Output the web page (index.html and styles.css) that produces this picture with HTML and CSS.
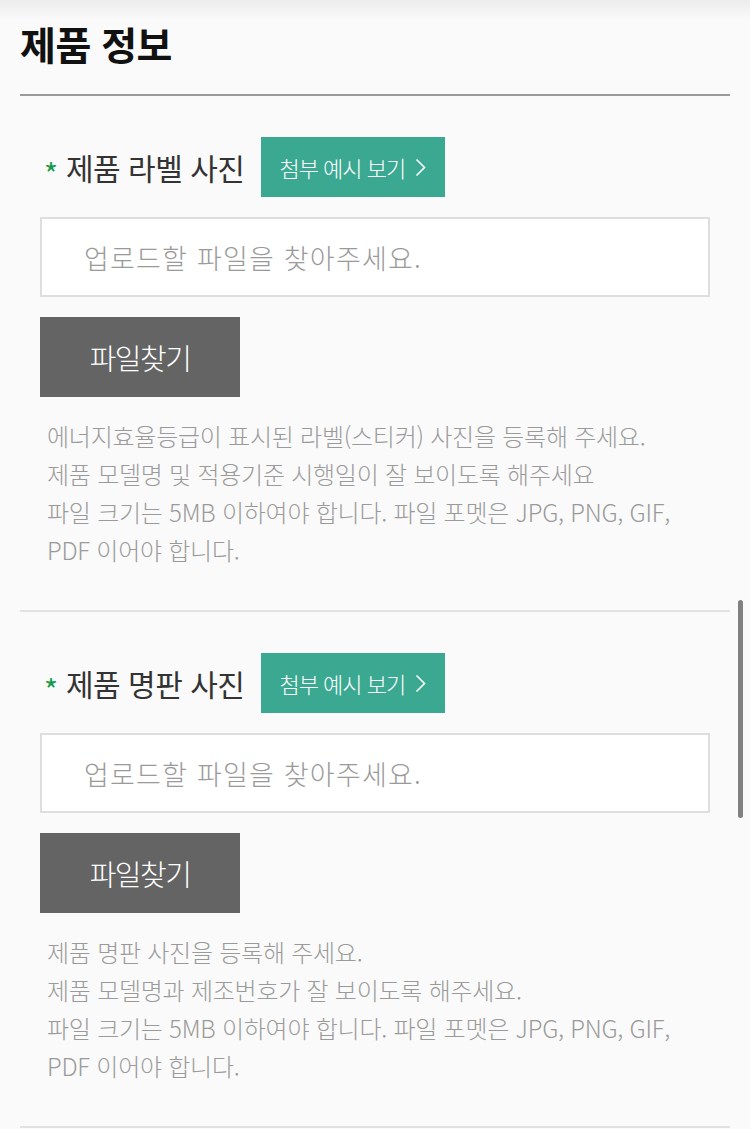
FILE: index.html
```html
<!DOCTYPE html>
<html lang="ko">
<head>
    <meta charset="UTF-8">
    <meta name="viewport" content="width=device-width, initial-scale=1">
    <title>제품 정보</title>
    <link rel="stylesheet" href="styles.css">
</head>
<body>
<div class="wrap">
    <!-- 제목 -->
    <div class="page-head">
        <h1>제품 정보</h1>
    </div>

    <!-- 제품 라벨 사진 -->
    <div class="upload-block">
        <div class="upload-label">
            <span class="req">*</span>
            <span class="label-text">제품 라벨 사진</span>
            <a href="#" class="btn-sample">첨부 예시 보기
                <svg width="11" height="19" viewBox="0 0 11 19"><path d="M1.5 1.5 L9.5 9.5 L1.5 17.5" fill="none" stroke="#fff" stroke-width="1.6"/></svg>
            </a>
        </div>
        <div class="file-input">업로드할 파일을 찾아주세요.</div>
        <button class="btn-find">파일찾기</button>
        <p class="help">
            에너지효율등급이 표시된 라벨(스티커) 사진을 등록해 주세요.<br>
            제품 모델명 및 적용기준 시행일이 잘 보이도록 해주세요<br>
            파일 크기는 5MB 이하여야 합니다. 파일 포멧은 JPG, PNG, GIF,<br>
            PDF 이어야 합니다.
        </p>
    </div>

    <!-- 제품 명판 사진 -->
    <div class="upload-block">
        <div class="upload-label">
            <span class="req">*</span>
            <span class="label-text">제품 명판 사진</span>
            <a href="#" class="btn-sample">첨부 예시 보기
                <svg width="11" height="19" viewBox="0 0 11 19"><path d="M1.5 1.5 L9.5 9.5 L1.5 17.5" fill="none" stroke="#fff" stroke-width="1.6"/></svg>
            </a>
        </div>
        <div class="file-input">업로드할 파일을 찾아주세요.</div>
        <button class="btn-find">파일찾기</button>
        <p class="help">
            제품 명판 사진을 등록해 주세요.<br>
            제품 모델명과 제조번호가 잘 보이도록 해주세요.<br>
            파일 크기는 5MB 이하여야 합니다. 파일 포멧은 JPG, PNG, GIF,<br>
            PDF 이어야 합니다.
        </p>
    </div>
</div>

<!-- 스크롤바 표시 -->
<div class="scroll-thumb"></div>
</body>
</html>
```

FILE: styles.css
```css
/* 기본 */
* { box-sizing: border-box; margin: 0; padding: 0; }
body {
    font-family: "Noto Sans CJK KR", "Noto Sans", sans-serif;
    background: #fafafa linear-gradient(#ececec, #fafafa 20px) no-repeat;
    color: #333;
}
.wrap { padding: 0 20px; }

/* 제목 */
.page-head {
    padding-top: 18px;
    padding-bottom: 26px;
    border-bottom: 2px solid #9a9a9a;
}
.page-head h1 {
    font-size: 39px;
    line-height: 50px;
    font-weight: bold;
    color: #111;
    letter-spacing: -0.5px;
}

/* 업로드 영역 */
.upload-block {
    padding: 41px 20px 41px;
    border-bottom: 2px solid #e2e2e2;
}
.upload-label {
    display: flex;
    align-items: center;
    height: 60px;
    padding-left: 4px;
}
.req {
    color: #1a9a4a;
    font-size: 30px;
    margin-right: 8px;
    position: relative;
    top: 6px;
}
.label-text {
    font-size: 30px;
    letter-spacing: -0.5px;
    color: #333;
    margin-right: 17px;
}
.btn-sample {
    display: flex;
    align-items: center;
    gap: 10px;
    height: 60px;
    width: 184px;
    padding-left: 18px;
    background: #3ba891;
    color: #fff;
    font-size: 22px;
    font-weight: 300;
    letter-spacing: -1px;
    text-decoration: none;
}
.file-input {
    margin-top: 20px;
    height: 80px;
    background: #fff;
    border: 2px solid #dedede;
    padding-left: 42px;
    display: flex;
    align-items: center;
    font-size: 27px;
    font-weight: 300;
    color: #9a9a9a;
    letter-spacing: 1.2px;
}
.btn-find {
    display: block;
    margin-top: 20px;
    width: 200px;
    height: 80px;
    border: 0;
    background: #646464;
    color: #fff;
    font-family: inherit;
    font-size: 29px;
    font-weight: 300;
    letter-spacing: -1.5px;
}
.help {
    margin-top: 20px;
    padding-left: 7px;
    font-size: 24px;
    line-height: 38px;
    font-weight: 300;
    color: #9a9a9a;
    letter-spacing: -0.25px;
}

/* 스크롤바 */
.scroll-thumb {
    position: fixed;
    left: 738px;
    top: 600px;
    width: 5px;
    height: 218px;
    border-radius: 3px;
    background: #808080;
}
```
